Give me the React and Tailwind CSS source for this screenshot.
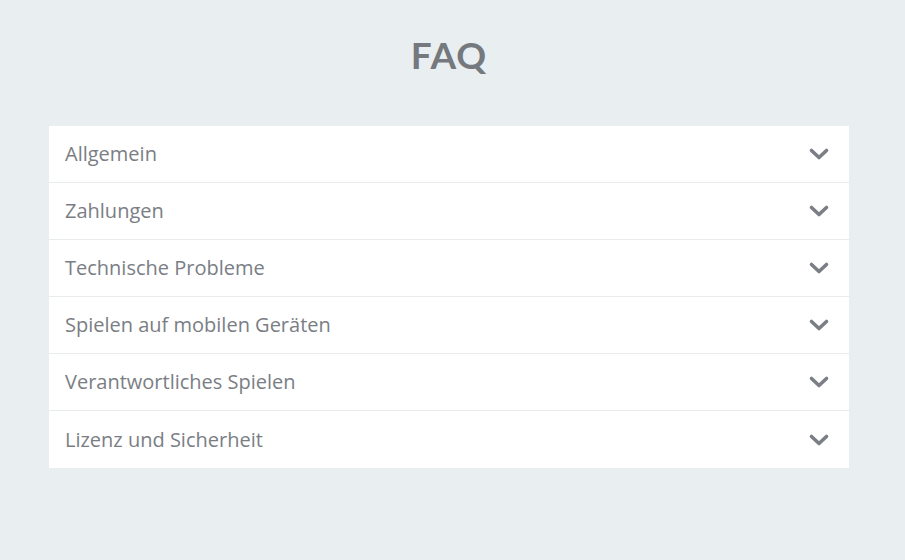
import React from "react";

const items = [
  "Allgemein",
  "Zahlungen",
  "Technische Probleme",
  "Spielen auf mobilen Geräten",
  "Verantwortliches Spielen",
  "Lizenz und Sicherheit",
];

function Chevron() {
  return (
    <svg width="22" height="14" viewBox="0 0 22 14" className="text-[#7b7f85]">
      <path d="M3.5 3.5 L11 10.5 L18.5 3.5" fill="none" stroke="currentColor" strokeWidth="3.6" strokeLinecap="round" strokeLinejoin="round" />
    </svg>
  );
}

export default function App() {
  return (
    <div className="min-h-[560px] w-full bg-[#e9eef1] font-['Open_Sans',sans-serif]">
      <div className="w-[898px] pt-[33px]">
        <h1 className="text-center text-[37px] leading-[44px] font-bold text-[#75797e] tracking-[1px] font-['Lato','Open_Sans',sans-serif]">
          FAQ
        </h1>
        <div className="mx-auto mt-[49px] w-[800px] bg-white">
          {items.map((label, i) => (
            <div
              key={label}
              className={`flex h-[57px] items-center justify-between pl-[16px] pr-[19px] ${
                i < items.length - 1 ? "border-b border-[#e8ecef]" : ""
              }`}
            >
              <span className="text-[20px] text-[#7a7e84]">{label}</span>
              <Chevron />
            </div>
          ))}
        </div>
      </div>
    </div>
  );
}
